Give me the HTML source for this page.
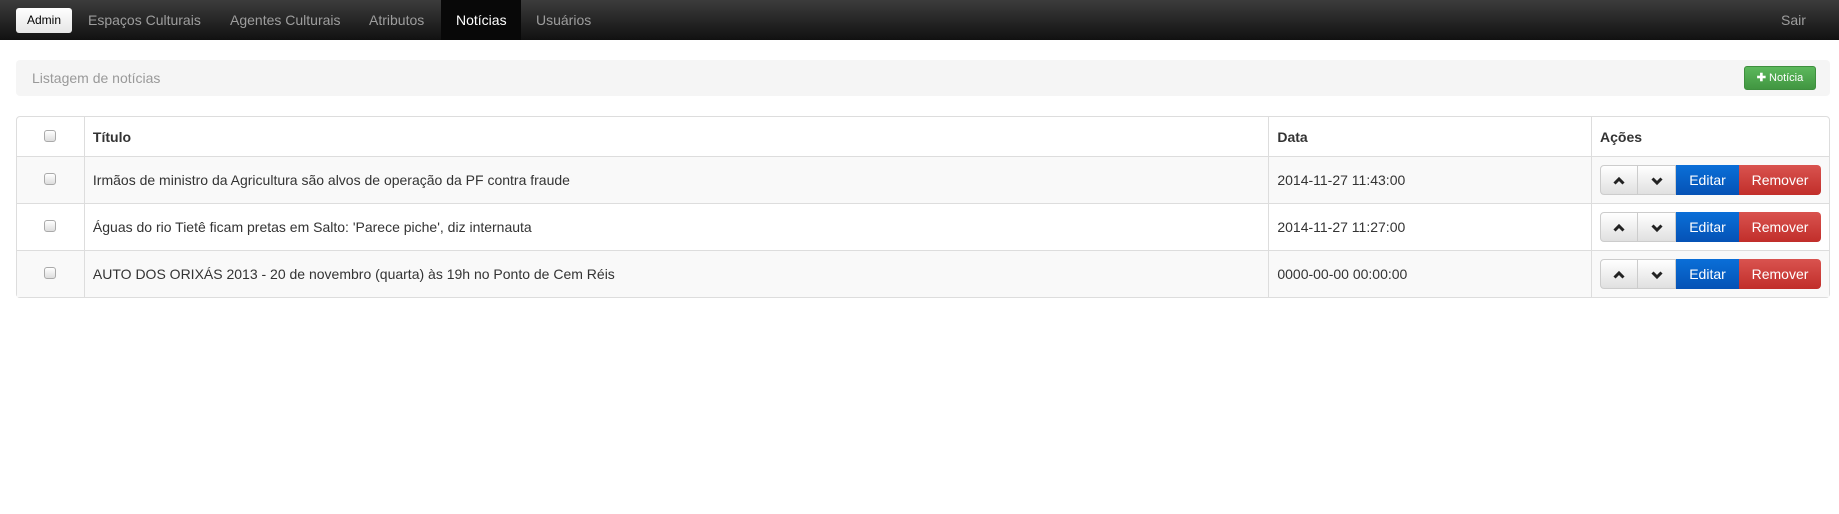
<!DOCTYPE html>
<html><head><meta charset="utf-8"><style>
*{box-sizing:border-box;margin:0;padding:0}
body{width:1839px;height:514px;background:#fff;font-family:"Liberation Sans",sans-serif;font-size:14px;color:#333;position:relative;overflow:hidden}
.nav{position:absolute;left:0;top:0;width:1839px;height:40px;background:linear-gradient(#3c3c3c,#222 60%,#111);}
.nav span{position:absolute;top:12px;color:#9d9d9d;font-size:14px}
.admin{position:absolute;left:16px;top:8px;width:56px;height:25px;background:linear-gradient(#fff,#e6e6e6);border-radius:3px;color:#000;font-size:12px;text-align:center;line-height:25px}
.act{position:absolute;left:441px;top:0;width:80px;height:40px;background:#080808}
.well{position:absolute;left:16px;top:60px;width:1814px;height:36px;background:#f5f5f5;border-radius:4px}
.well .t{position:absolute;left:16px;top:10px;color:#999;font-size:14px}
.add{position:absolute;left:1744px;top:66px;width:72px;height:24px;background:linear-gradient(#5cb85c,#419641);border:1px solid #3e8f3e;border-radius:3px;color:#fff;font-size:11px;line-height:22px;text-align:center}
table{position:absolute;left:16px;top:116px;width:1814px;border-collapse:separate;border-spacing:0;border:1px solid #ddd;border-radius:4px}
td,th{border-left:1px solid #ddd;border-top:1px solid #ddd;padding:0 8px;text-align:left;vertical-align:middle}
th{height:39px;border-top:none;font-weight:bold}
td{height:47px}
tr td:first-child,tr th:first-child{border-left:none;text-align:center;padding:0}
tbody tr:nth-child(odd){background:#f9f9f9}
.cb{display:inline-block;width:12px;height:12px;border:1px solid #aaa;border-radius:3px;background:linear-gradient(#fff,#ddd)}
.bg{display:flex;height:30px}
.bg div{height:30px;line-height:30px;text-align:center;font-size:14px}
.u{width:38px;background:linear-gradient(#fff,#e0e0e0);border:1px solid #ccc;border-radius:4px 0 0 4px}
.d{width:38px;background:linear-gradient(#fff,#e0e0e0);border:1px solid #ccc;border-left:none}
.u svg,.d svg{margin-top:9px}
.e{width:63px;background:linear-gradient(#0a6fd8,#0552b5);color:#fff}
.r{width:82px;background:linear-gradient(#d9534f,#c12e2a);color:#fff;border-radius:0 4px 4px 0}
</style></head><body>
<div class="nav">
<div class="admin">Admin</div>
<span style="left:88px">Espaços Culturais</span>
<span style="left:230px">Agentes Culturais</span>
<span style="left:369px">Atributos</span>
<div class="act"></div>
<span style="left:456px;color:#fff">Notícias</span>
<span style="left:536px">Usuários</span>
<span style="left:1781px">Sair</span>
</div>
<div class="well"><div class="t">Listagem de notícias</div></div>
<div class="add"><b>✚</b> Notícia</div>
<table>
<colgroup><col style="width:67px"><col style="width:1186px"><col style="width:323px"><col></colgroup>
<thead><tr><th><span class="cb"></span></th><th>Título</th><th>Data</th><th>Ações</th></tr></thead>
<tbody>
<tr><td><span class="cb"></span></td><td>Irmãos de ministro da Agricultura são alvos de operação da PF contra fraude</td><td>2014-11-27 11:43:00</td><td><div class="bg"><div class="u"><svg width="14" height="12" viewBox="0 0 14 12"><path d="M2.5 8.5L7 4L11.5 8.5" stroke="#222" stroke-width="3" fill="none"/></svg></div><div class="d"><svg width="14" height="12" viewBox="0 0 14 12"><path d="M2.5 3.5L7 8L11.5 3.5" stroke="#222" stroke-width="3" fill="none"/></svg></div><div class="e">Editar</div><div class="r">Remover</div></div></td></tr>
<tr><td><span class="cb"></span></td><td>Águas do rio Tietê ficam pretas em Salto: 'Parece piche', diz internauta</td><td>2014-11-27 11:27:00</td><td><div class="bg"><div class="u"><svg width="14" height="12" viewBox="0 0 14 12"><path d="M2.5 8.5L7 4L11.5 8.5" stroke="#222" stroke-width="3" fill="none"/></svg></div><div class="d"><svg width="14" height="12" viewBox="0 0 14 12"><path d="M2.5 3.5L7 8L11.5 3.5" stroke="#222" stroke-width="3" fill="none"/></svg></div><div class="e">Editar</div><div class="r">Remover</div></div></td></tr>
<tr><td><span class="cb"></span></td><td>AUTO DOS ORIXÁS 2013 - 20 de novembro (quarta) às 19h no Ponto de Cem Réis</td><td>0000-00-00 00:00:00</td><td><div class="bg"><div class="u"><svg width="14" height="12" viewBox="0 0 14 12"><path d="M2.5 8.5L7 4L11.5 8.5" stroke="#222" stroke-width="3" fill="none"/></svg></div><div class="d"><svg width="14" height="12" viewBox="0 0 14 12"><path d="M2.5 3.5L7 8L11.5 3.5" stroke="#222" stroke-width="3" fill="none"/></svg></div><div class="e">Editar</div><div class="r">Remover</div></div></td></tr>
</tbody></table>
</body></html>
